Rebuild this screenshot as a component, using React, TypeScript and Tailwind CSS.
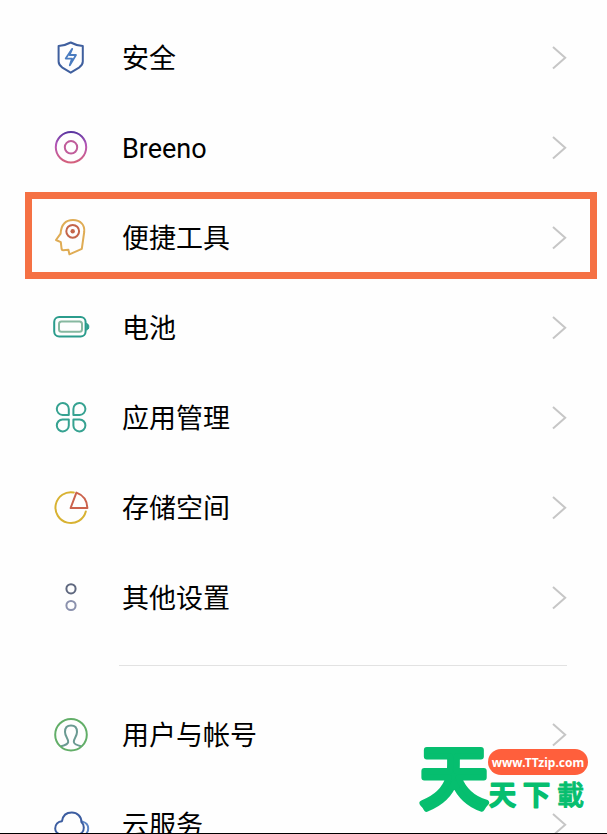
import React from 'react';

const ShieldIcon = () => (
  <>
    <path d="M19.7 4.5C23.5 6.6 27.5 7.7 31.8 8V23.6C31.8 26.6 30.4 28 28 29.6L19.7 34.7L11.4 29.6C9 28 7.6 26.6 7.6 23.6V8C11.9 7.7 15.9 6.6 19.7 4.5Z" stroke="#3f5f9e" />
    <path d="M21.2 10.8L14.7 20.6H21L18.8 27.4L25 17H18.6Z" stroke="#4a7cc0" strokeWidth="1.8" />
  </>
);

const BreenoIcon = () => (
  <>
    <defs>
      <linearGradient id="breeno" x1="0" y1="0" x2="0" y2="1">
        <stop offset="0" stopColor="#5a35a0" />
        <stop offset="0.4" stopColor="#b457b8" />
        <stop offset="1" stopColor="#d4607c" />
      </linearGradient>
    </defs>
    <circle cx="20" cy="19.3" r="15.2" stroke="url(#breeno)" />
    <circle cx="20" cy="19.3" r="6.2" stroke="#c05c9a" />
  </>
);

const HeadIcon = () => (
  <>
    <path d="M5 22L9.6 15.6C10.2 7 14 2 22 2C29.5 2 34 7 33.2 14L30.8 30.8L18.4 36.3L17.4 31.8L12 32.2Q10.8 32.2 10.6 31L9.8 24.2Z" stroke="#dfac55" />
    <circle cx="21.7" cy="13.3" r="6.4" stroke="#c4654a" />
    <circle cx="21.7" cy="13.3" r="2.2" fill="#c4654a" />
  </>
);

const BatteryIcon = () => (
  <>
    <rect x="3.2" y="9" width="31.4" height="19.4" rx="5" stroke="#2b9c8c" />
    <rect x="8" y="13.6" width="23" height="10.2" rx="2.5" stroke="#86b8a0" />
    <path d="M35.5 15.5C37.2 15.8 37.8 17 37.8 18.8C37.8 20.6 37.2 21.8 35.5 22Z" fill="#2b9c8c" stroke="#2b9c8c" strokeWidth="1" />
  </>
);

const AppsIcon = () => (
  <g stroke="#36a291">
    <path d="M17.8 17H11.6A6 6 0 1 1 17.8 11Z" />
    <path d="M22.4 17H28.6A6 6 0 1 0 22.4 11Z" />
    <path d="M17.8 21.4H11.6A6 6 0 1 0 17.8 27.4Z" />
    <path d="M22.4 21.4H28.6A6 6 0 1 1 22.4 27.4Z" />
  </g>
);

const StorageIcon = () => (
  <>
    <path d="M22.8 4.5A15.4 15.4 0 1 0 34.8 23.4" stroke="#d8b232" />
    <path d="M25.4 4.6L19.6 20H36.4C36.2 12.8 32 7 25.4 4.6Z" stroke="#cb624c" />
  </>
);

const OtherIcon = () => (
  <>
    <circle cx="20" cy="10.8" r="4.6" stroke="#5f687f" />
    <circle cx="20" cy="27.5" r="4.6" stroke="#8b91ad" />
  </>
);

const UserIcon = () => (
  <>
    <path d="M10 31.2C12.8 30.6 16.8 29.8 17.2 27C17.6 23.8 14 21.6 14 17C14 13 16.4 10.6 20 10.6C23.6 10.6 26 13 26 17C26 21.6 22.4 23.8 22.8 27C23.2 29.8 27.2 30.6 30 31.2" stroke="#6a9a92" />
    <circle cx="20" cy="19.7" r="15.8" stroke="#62ae68" />
  </>
);

const CloudIcon = () => (
  <>
    <path d="M31.6 16.6C35.2 17.6 37.2 20 37.2 23.4C37.2 27.6 34.4 30.4 30.4 30.8" stroke="#5d86c6" />
    <path d="M11.2 29.4C7 29.4 4.2 27 4.2 23.6C4.2 19.6 7 16.6 11 16.2C11.8 10.8 15.6 7.6 20.8 7.6C26.4 7.6 30.4 11.6 30.4 17C32.2 18.6 32.8 20.4 32.8 22.6C32.8 26.8 30 29.4 26 29.4Z" stroke="#3c5da0" />
  </>
);

interface Item {
  label: string;
  icon: React.FC;
  marked?: boolean;
}

const systemItems: Item[] = [
  { label: '安全', icon: ShieldIcon },
  { label: 'Breeno', icon: BreenoIcon },
  { label: '便捷工具', icon: HeadIcon, marked: true },
  { label: '电池', icon: BatteryIcon },
  { label: '应用管理', icon: AppsIcon },
  { label: '存储空间', icon: StorageIcon },
  { label: '其他设置', icon: OtherIcon },
];

const accountItems: Item[] = [
  { label: '用户与帐号', icon: UserIcon },
  { label: '云服务', icon: CloudIcon },
];

const SettingsRow: React.FC<{ item: Item }> = ({ item }) => {
  const Icon = item.icon;
  return (
    <li className="relative">
      <button type="button" className="flex h-[90px] w-full items-center pr-10 pl-[51px] text-left">
        <svg className="size-10 shrink-0" viewBox="0 0 40 40" fill="none" strokeWidth="2" strokeLinejoin="round" strokeLinecap="round" aria-hidden="true">
          <Icon />
        </svg>
        <span className="ml-[31px] flex-1 pt-0.5 text-[27px] leading-9 text-black">{item.label}</span>
        <svg className="h-6 w-4 shrink-0" viewBox="0 0 16 24" fill="none" stroke="#c6c6c6" strokeWidth="2" aria-hidden="true">
          <path d="M2 1L14.2 11.7L2 22.4" />
        </svg>
      </button>
      {item.marked && (
        <div className="pointer-events-none absolute -top-px right-[10px] bottom-1 left-[25px] border-7 border-[#f57144]"></div>
      )}
    </li>
  );
};

const Watermark = () => (
  <svg
    className="pointer-events-none absolute right-4 bottom-4 h-[76px] w-[172px] overflow-visible"
    viewBox="0 0 172 76"
    fontFamily="'Noto Sans CJK TC', sans-serif"
    fontWeight="500"
    strokeLinejoin="round"
    strokeLinecap="round"
  >
    <g fill="#06be6f" stroke="#06be6f">
      <text x="1" y="62" fontSize="68" strokeWidth="6">天</text>
      <text x="70 104" y="64" fontSize="27" strokeWidth="2">天下</text>
      <text x="138" y="64" fontSize="27" strokeWidth="1">載</text>
    </g>
    <rect x="69" y="8" width="100" height="26" rx="13" fill="#ff5f3c" />
    <text x="119" y="26" fontSize="12" fontWeight="700" fontFamily="'Noto Sans', sans-serif" textAnchor="middle" fill="#fff">
      www.TTzip.com
    </text>
  </svg>
);

const App: React.FC = () => {
  return (
    <main className="relative h-screen overflow-hidden border-b border-black bg-[#fefefe] pt-[13px] font-[Roboto,'Noto_Sans_CJK_SC',sans-serif]">
      <ul>
        {systemItems.map((item) => (
          <SettingsRow key={item.label} item={item} />
        ))}
      </ul>
      <hr className="mt-[22px] mr-10 mb-6 ml-[119px] border-[#e2e2e2]" />
      <ul>
        {accountItems.map((item) => (
          <SettingsRow key={item.label} item={item} />
        ))}
      </ul>
      <Watermark />
    </main>
  );
};

export default App;
